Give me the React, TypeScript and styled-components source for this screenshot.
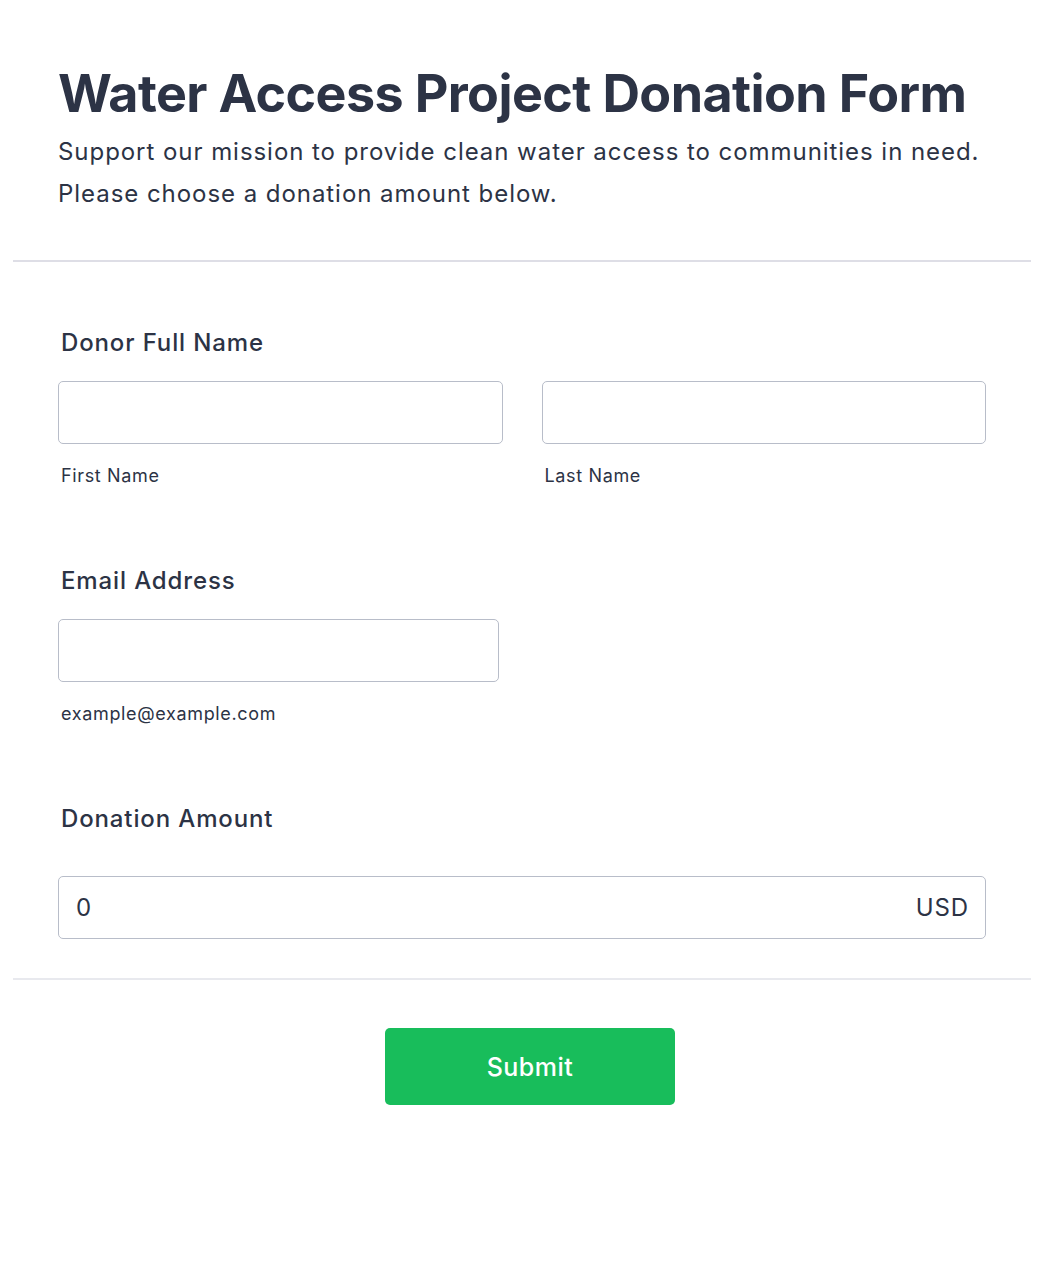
import React from "react";
import styled, { createGlobalStyle } from "styled-components";

const GlobalStyle = createGlobalStyle`
  * { box-sizing: border-box; }
  body {
    margin: 0;
    background: #fff;
    font-family: Inter, "Noto Sans", "Liberation Sans", sans-serif;
    color: #2c3345;
  }
`;

function App() {
  return (
    <>
      <GlobalStyle />
      <Form>
        <Header>
          <Title>Water Access Project Donation Form</Title>
          <Subtitle>
            Support our mission to provide clean water access to communities in need.
            <br />
            Please choose a donation amount below.
          </Subtitle>
        </Header>

        <Fields>
          <Field $gap={78}>
            <Label>Donor Full Name</Label>
            <Row>
              <Col>
                <Input type="text" />
                <SubLabel>First Name</SubLabel>
              </Col>
              <Col>
                <Input type="text" />
                <SubLabel>Last Name</SubLabel>
              </Col>
            </Row>
          </Field>

          <Field $gap={78}>
            <Label>Email Address</Label>
            <Col $width="441px">
              <Input type="email" />
              <SubLabel>example@example.com</SubLabel>
            </Col>
          </Field>

          <Field $gap={39}>
            <Label $space={42}>Donation Amount</Label>
            <AmountBox>
              <AmountInput type="text" defaultValue="0" />
              <Currency>USD</Currency>
            </AmountBox>
          </Field>
        </Fields>

        <Footer>
          <SubmitButton type="button">Submit</SubmitButton>
        </Footer>
      </Form>
    </>
  );
}

const Form = styled.form`
  margin: 0 13px;
  padding-bottom: 180px;
`;

const Header = styled.div`
  padding: 63px 45px 45px;
  border-bottom: 2px solid #dedee6;
`;

const Title = styled.h1`
  margin: 0;
  font-size: 52px;
  line-height: 62px;
  font-weight: 700;
  letter-spacing: -0.6px;
`;

const Subtitle = styled.p`
  margin: 6px 0 0;
  font-size: 24px;
  line-height: 42px;
  font-weight: 400;
  letter-spacing: 0.95px;
`;

const Fields = styled.div`
  padding: 66px 45px 0;
  border-bottom: 2px solid #e8e9ee;
`;

const Field = styled.div<{ $gap: number }>`
  display: flex;
  flex-direction: column;
  padding-bottom: ${(p) => p.$gap}px;
`;

const Label = styled.label<{ $space?: number }>`
  display: block;
  padding-left: 3px;
  font-size: 24px;
  line-height: 30px;
  font-weight: 500;
  letter-spacing: 0.87px;
  margin-bottom: ${(p) => p.$space ?? 23}px;
`;

const Row = styled.div`
  display: grid;
  grid-template-columns: 1fr 1fr;
  gap: 39px;
`;

const Col = styled.div<{ $width?: string }>`
  display: flex;
  flex-direction: column;
  width: ${(p) => p.$width || "auto"};
`;

const Input = styled.input`
  height: 63px;
  width: 100%;
  border: 1px solid #b8bdc9;
  border-radius: 5px;
  background: #fff;
  font: inherit;
  font-size: 24px;
  padding: 0 17px;
  color: #2c3345;
  outline: none;
`;

const SubLabel = styled.span`
  display: block;
  padding-left: 3px;
  margin-top: 20px;
  font-size: 18px;
  line-height: 24px;
  letter-spacing: 0.65px;
  color: #2c3345;
`;

const AmountBox = styled.div`
  display: flex;
  align-items: center;
  height: 63px;
  border: 1px solid #b8bdc9;
  border-radius: 5px;
  padding: 0 16px 0 17px;
`;

const AmountInput = styled.input`
  flex: 1;
  border: none;
  outline: none;
  background: transparent;
  font: inherit;
  font-size: 24px;
  letter-spacing: 0.9px;
  color: #2c3345;
  padding: 0;
`;

const Currency = styled.span`
  font-size: 24px;
  letter-spacing: 0.9px;
  color: #2c3345;
`;

const Footer = styled.div`
  display: flex;
  justify-content: center;
  padding: 48px 0 0 16px;
`;

const SubmitButton = styled.button`
  width: 290px;
  height: 77px;
  border: none;
  border-radius: 5px;
  background: #18bd5b;
  color: #fff;
  font-family: inherit;
  font-size: 25px;
  font-weight: 500;
  letter-spacing: 0.5px;
  cursor: pointer;
`;

export default App;
